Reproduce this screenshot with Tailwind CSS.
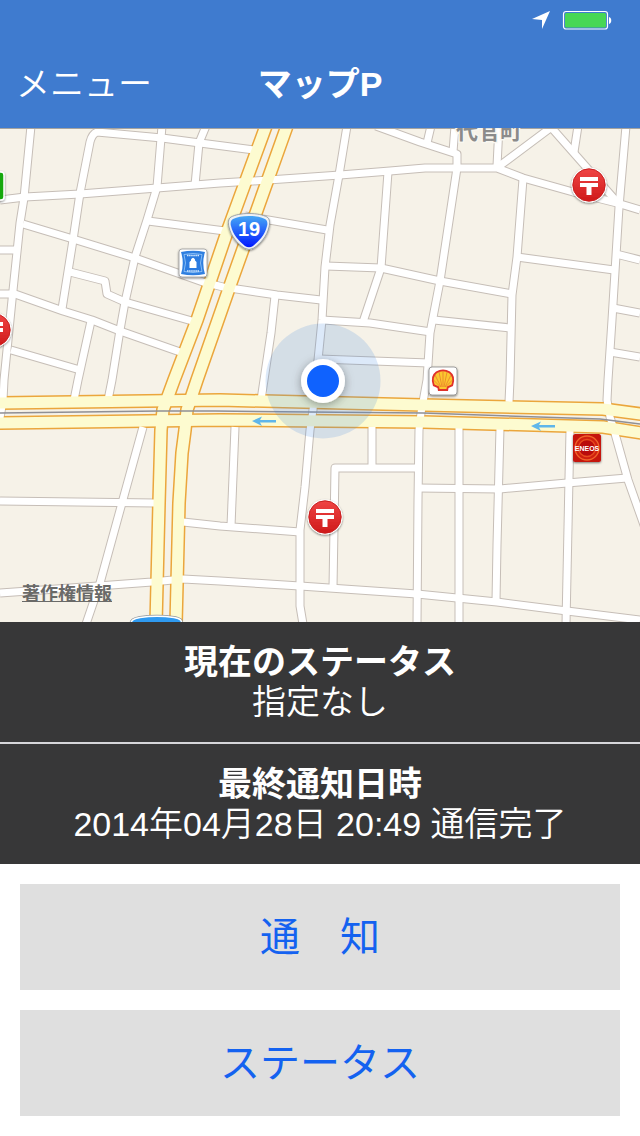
<!DOCTYPE html>
<html lang="ja">

<head>
  <meta charset="UTF-8" />
  <meta name="viewport" content="width=device-width, initial-scale=1.0" />
  <title>マップP</title>
  <script src="https://cdn.jsdelivr.net/npm/@tailwindcss/browser@4"></script>
</head>

<body class="min-h-screen bg-white font-['Liberation_Sans','Noto_Sans_CJK_JP',sans-serif]">
  <header class="bg-[#3f7bcf] text-white">
    <div class="flex h-10 items-center justify-end gap-3 pr-7">
      <svg class="size-[18px]" viewBox="0 0 18 18" fill="#fff" aria-label="位置情報">
        <path d="M18 0L10 18V9L0 8Z" />
      </svg>
      <svg class="h-5 w-[50px]" viewBox="0 0 50 20" aria-label="バッテリー">
        <rect x="1.500" y="1.500" width="44" height="17.500" rx="2.500" fill="none" stroke="#fff" stroke-width="1.200" />
        <rect x="3" y="3" width="41" height="14.500" rx="1.500" fill="#47d755" />
        <path d="M47 7C50 7.500 50 13.500 47 14Z" fill="#fff" />
      </svg>
    </div>
    <nav class="grid h-22 grid-cols-3 items-center px-4 text-[34px] leading-10">
      <button type="button" class="justify-self-start font-[350]">メニュー</button>
      <h1 class="text-center font-bold">マップP</h1>
    </nav>
  </header>

  <main>
    <div class="relative">
      <svg class="block h-auto w-full bg-[#f6f2e8]" viewBox="0 128 640 494" aria-label="地図">
        <defs>
          <g id="streets">
            <path d="M31 126L24 198L20 223L12 300L4 380L3 400L0 418" />
            <path d="M254 150L200 143L162 138L97 132Q92 134 90 142L80 193L73 240L62 309" />
            <path d="M0 200L25 197L80 194L157 188L220 183L253 181L340 175L390 171L425 168L457 168L497 168L523 178L573 192L617 203L640 210" />
            <path d="M162 126L157 187L147 220L135 257L125 302L120 330L112 380L108 400" />
            <path d="M206 126L199 143L195 185" />
            <path d="M148 221L225 231" />
            <path d="M23 224L73 239L135 258L203 282L223 287L277 295L321 300" />
            <path d="M70 272L105 281L107 294L125 302L192 321" />
            <path d="M0 250L17 250" />
            <path d="M0 294L15 294L63 311L92 320L120 331L180 352" />
            <path d="M91 321L78 380L74 400" />
            <path d="M11 350L80 370" />
            <path d="M347 126L339 175L330 225L325 267L322 320L317 370L313 410L310 430L305 487L300 530L300 606L303 624" />
            <path d="M245 216L327 230" />
            <path d="M326 266L381 268L440 281L512 294" />
            <path d="M388 172L381 268L363 322" />
            <path d="M322 320L370 323L431 332" />
            <path d="M319 359L429 363" />
            <path d="M275 296L271 333L261 400" />
            <path d="M376 126L420 142L457 154L457 168L440 281L430 333L427 380L421 413L419 430L418 500L417 624" />
            <path d="M455 126L453 152M431 126L427 143M499 126L497 166" />
            <path d="M553 126L498 167M550 126L580 160L617 202" />
            <path d="M578 126L574 152" />
            <path d="M626 126L619 207L612 320L608 380L607 400L610 417L614 430L628 480L645 528" />
            <path d="M517 257L614 270" />
            <path d="M523 179L517 257L512 295L510 380L509 402" />
            <path d="M434 320L511 328" />
            <path d="M616 254L640 260M613 308L640 313M610 352L640 357" />
            <path d="M143 427L122 503L100 583L86 624" />
            <path d="M0 501L155 503" />
            <path d="M0 593L98 586L152 582L183 579L220 581L300 586L417 594L497 602L567 611L640 620" />
            <path d="M183 522L220 526L300 532" />
            <path d="M235 427L231 526" />
            <path d="M372 427L372 467" />
            <path d="M418 468L335 468L333 588" />
            <path d="M418 488L500 489L567 483L627 478" />
            <path d="M459 427L459 624" />
            <path d="M500 428L497 545L496 601" />
            <path d="M570 430L566 624" />
          </g>
          <g id="highways">
            <path d="M266 126L226 235L197 320L174 380L163 410L161 430L159 503L156 624" />
            <path d="M287 126L232 280L197 380L187 410L185 430L182 453L179 503L176 624" />
            <path d="M-8 403L220 400L423 405L603 409L648 415" />
            <path d="M-8 423L220 420L423 422L603 427L648 434" />
          </g>
          <linearGradient id="red" x1="0" y1="0" x2="0" y2="1">
            <stop offset="0" stop-color="#ef4444" />
            <stop offset="1" stop-color="#cf1a1a" />
          </linearGradient>
          <linearGradient id="shield" x1="0" y1="0" x2="0" y2="1">
            <stop offset="0" stop-color="#45a7f5" />
            <stop offset="1" stop-color="#0018ff" />
          </linearGradient>
          <filter id="shadow" x="-50%" y="-50%" width="200%" height="200%">
            <feDropShadow dx="0" dy="1" stdDeviation="1" flood-opacity=".5" />
          </filter>
          <filter id="glow" x="-50%" y="-50%" width="200%" height="200%">
            <feDropShadow dx="0" dy="2" stdDeviation="5" flood-opacity=".35" />
          </filter>
          <!-- post office -->
          <g id="post">
            <circle r="17.500" fill="#fff" />
            <circle r="16.200" fill="url(#red)" stroke="#c92020" />
            <path d="M-9 -8H9V-4H-9ZM-9 -2H9V2H2.500V10H-2.500V2H-9Z" fill="#fff" />
          </g>
        </defs>

        <!-- roads: casings first, then fills so that crossings stay open -->
        <g fill="none" stroke-linejoin="round">
          <use href="#streets" stroke="#c6beb7" stroke-width="9" />
          <use href="#highways" stroke="#eba63c" stroke-width="14" />
          <use href="#streets" stroke="#fff" stroke-width="7" />
          <use href="#highways" stroke="#fdfbd0" stroke-width="11" />
          <path d="M0 413L160 411L215 411L423 413L600 419L640 424" stroke="#8f8f94" stroke-width="1.500" />
        </g>
        <path d="M0 128.500H640" stroke="#a5a39f" stroke-width="1" />

        <text x="456" y="139" font-size="22" font-weight="700" fill="#8b8b8b" stroke="#f9f7f0" stroke-width="3" paint-order="stroke">代官町</text>

        <!-- one-way arrows -->
        <g fill="#5fb6ea">
          <path id="oneway" d="M252 421L262 416.500L260 420H276V422.500H260L262 426Z" />
          <use href="#oneway" x="279" y="5" />
        </g>

        <!-- route 19 -->
        <g filter="url(#shadow)">
          <path d="M249 213.500C257 213.500 263 215 267 217C270 219 270 223 269 227C267 236 261 243 254 248Q249 251 244 248C237 243 231 236 229 227C228 223 228 219 231 217C235 215 241 213.500 249 213.500Z" fill="#eef1f5" stroke="#8d949c" stroke-width=".8" />
          <path d="M249 216C256 216 261 217 265 219C267 220 268 223 267 226C265 235 259 241 253 246Q249 248.500 245 246C239 241 233 235 231 226C230 223 231 220 233 219C237 217 242 216 249 216Z" fill="url(#shield)" />
        </g>
        <text x="249" y="236" text-anchor="middle" font-size="20" font-weight="700" fill="#fff">19</text>
        <path d="M131 626C130 620 134 618.500 140 617.500Q157 615 174 617.500C180 618.500 183 620 181 626Z" fill="#2f9af0" stroke="#8d949c" stroke-width="3" />
        <path d="M131 626C130 620 134 618.500 140 617.500Q157 615 174 617.500C180 618.500 183 620 181 626Z" fill="#2f9af0" stroke="#fff" stroke-width="1.500" />

        <!-- historic site -->
        <g filter="url(#shadow)">
          <rect x="179" y="249" width="28" height="28" rx="3" fill="#fff" stroke="#9a9a9a" stroke-width=".8" />
        </g>
        <path d="M181 252Q193 249.500 205 252Q201.500 263 205 274Q193 276.500 181 274Q184.500 263 181 252Z" fill="#2f7fe0" />
        <path d="M184 254.500Q193 252.500 202 254.500Q199 263 202 271.500Q193 273.500 184 271.500Q187 263 184 254.500Z" fill="#2b7be0" stroke="#9ccbfa" stroke-width=".8" />
        <path d="M187 255.500H199M187 271H199" stroke="#d5eafe" stroke-width="1.500" stroke-dasharray="1.500 .6" />
        <path d="M189.500 268V262L191 260.500V259.500Q193 256 195 259.500V260.500L196.500 262V268Z" fill="#fff" />

        <!-- shell -->
        <g filter="url(#shadow)">
          <rect x="429" y="367" width="28" height="28" rx="3" fill="#fff" stroke="#8a8a8a" stroke-width=".8" />
        </g>
        <path d="M438 391L437.500 388L433 386Q429.500 376 436 371.500Q443 367.500 450 371.500Q456.500 376 453 386L448.500 388L448 391Z" fill="#e0312a" />
        <path d="M439.500 389L439 386.500L434.500 384.500Q432 377 437 373Q443 369.500 449 373Q454 377 451.500 384.500L447 386.500L446.500 389Z" fill="#fbc72f" />
        <path d="M443 387V371M442 387L439 372M444 387L447 372M441 387L435 375M445 387L451 375M440.500 387L433.500 380M445.500 387L452.500 380" stroke="#e4662b" stroke-width=".6" />

        <!-- eneos -->
        <g filter="url(#shadow)">
          <rect x="573" y="434" width="28" height="28" rx="2.500" fill="#c5120d" />
        </g>
        <circle cx="587" cy="448" r="12" fill="#d0200f" stroke="#f0642a" stroke-width="1.300" />
        <circle cx="587" cy="448" r="8.500" fill="#b90c0c" stroke="#e84c1f" stroke-width="1.300" />
        <text x="587" y="451" text-anchor="middle" font-size="7" font-weight="700" fill="#fff">ENEOS</text>

        <g filter="url(#shadow)">
          <rect x="-24" y="172" width="28" height="28" rx="3" fill="#18a80e" stroke="#fff" stroke-width="1.500" />
        </g>
        <g filter="url(#shadow)">
          <use href="#post" x="589" y="185" />
          <use href="#post" x="325" y="517" />
          <use href="#post" x="-6" y="330" />
        </g>

        <!-- current location -->
        <circle cx="323" cy="381" r="57.500" fill="#3f83dd" fill-opacity=".18" />
        <circle cx="323" cy="381" r="22" fill="#fff" filter="url(#glow)" />
        <circle cx="323" cy="381" r="16" fill="#0f62fe" />
      </svg>
      <a href="#" class="absolute bottom-4 left-[22px] text-lg leading-6 font-bold text-[#6a6a68] underline">著作権情報</a>
    </div>

    <div class="divide-y-2 divide-[#d6d6da] bg-[#373738] text-center text-[34px] leading-10 text-white">
      <section class="py-5">
        <h2 class="font-bold">現在のステータス</h2>
        <p class="font-[350]">指定なし</p>
      </section>
      <section class="py-5">
        <h2 class="font-bold">最終通知日時</h2>
        <p class="font-[350]">2014年04月28日 20:49 通信完了</p>
      </section>
    </div>

    <div class="grid gap-5 p-5 text-[40px] leading-[106px] text-[#1462f0]">
      <button type="button" class="bg-[#dfdfdf]">通　知</button>
      <button type="button" class="bg-[#dfdfdf]">ステータス</button>
    </div>
  </main>
</body>

</html>
